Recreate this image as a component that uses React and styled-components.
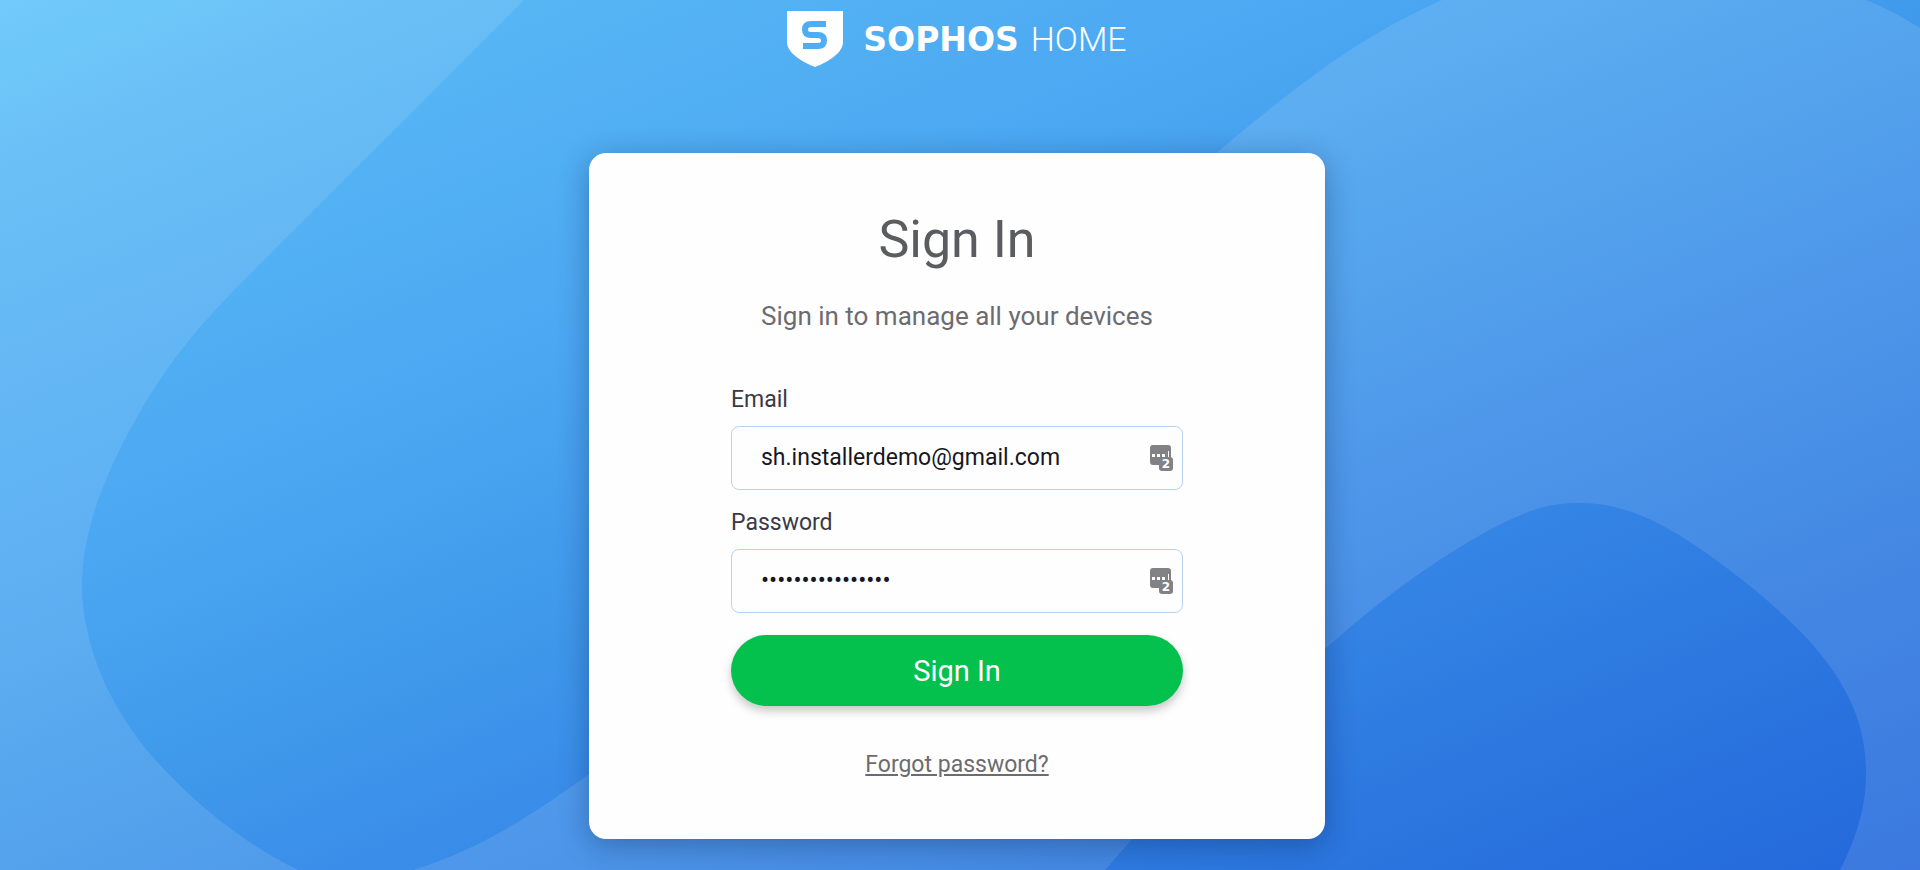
import React, { useState } from 'react';
import styled, { createGlobalStyle } from 'styled-components';

const GlobalStyle = createGlobalStyle`
  * {
    box-sizing: border-box;
  }

  body {
    margin: 0;
    font-family: Roboto, "Liberation Sans", sans-serif;
    font-size: 23px;
    line-height: 28px;
  }
`;

function Waves() {
  return (
    <Backdrop viewBox="0 0 1920 870" preserveAspectRatio="xMidYMid slice" aria-hidden="true">
      <path
        fill="#fff"
        fillOpacity="0.11"
        fillRule="evenodd"
        d="M0 0H524L300 224C262 262 230 293 200 327C176 355 155 385 137 417C105 473 82 532 82 585
          C82 624 95 665 111 696C124 721 142 746 161 766C182 789 207 811 230 828C251 844 272 857 298 870H413
          C443 861 470 849 497 834C530 816 560 795 589 774C800 610 1000 340 1220 150C1253 122 1289 93 1325 67
          C1362 41 1401 18 1442 0H1866C1886 8 1904 18 1920 28V870H1840C1854 843 1866 810 1866 774
          C1866 744 1860 720 1848 696C1836 672 1819 651 1801 632C1779 610 1754 588 1728 569
          C1703 550 1677 532 1649 519C1627 509 1604 503 1581 503C1565 503 1549 504 1534 510
          C1500 522 1467 542 1435 563C1397 588 1360 618 1325 649C1250 717 1173 790 1105 870H0Z"
      />
    </Backdrop>
  );
}

function Logo() {
  return (
    <Brand>
      <svg width="56" height="56" viewBox="0 0 56 56" aria-hidden="true">
        <path fill="#fff" d="M0 0H56V31C56 42 41 51 28 56C15 51 0 42 0 31Z" />
        <path
          fill="none"
          stroke="#4fadf3"
          strokeWidth="6"
          d="M39 13H24Q18 13 18 18.500Q18 24 24 24H31Q37 24 37 29.500Q37 35 31 35H16"
        />
      </svg>
      <BrandName>
        <strong>SOPHOS</strong>
        <span>HOME</span>
      </BrandName>
    </Brand>
  );
}

function ManagerIcon() {
  return (
    <FieldIcon width="24" height="28" viewBox="0 0 24 28" aria-hidden="true">
      <rect width="21" height="20" rx="3" fill="#828285" />
      <rect x="9" y="12" width="14" height="14" rx="3" fill="#828285" />
      <rect x="2" y="9" width="3" height="3" fill="#fff" />
      <rect x="7" y="9" width="3" height="3" fill="#fff" />
      <rect x="12" y="9" width="3" height="3" fill="#fff" />
      <rect x="18" y="6" width="1" height="6" fill="#fff" />
      <text x="16" y="23" textAnchor="middle" fontSize="12" fontWeight="700" fontFamily="DejaVu Sans, sans-serif" fill="#fff">2</text>
    </FieldIcon>
  );
}

function Field({ id, label, ...rest }) {
  return (
    <FieldGroup>
      <label htmlFor={id}>{label}</label>
      <FieldBox>
        <input id={id} name={id} {...rest} />
        <ManagerIcon />
      </FieldBox>
    </FieldGroup>
  );
}

function App() {
  const [email, setEmail] = useState('sh.installerdemo@gmail.com');
  const [password, setPassword] = useState('installerdemo123');

  const handleSubmit = (e) => {
    e.preventDefault();
  };

  return (
    <>
      <GlobalStyle />
      <Page>
        <Waves />
        <Logo />
        <Card>
          <Title>Sign In</Title>
          <Subtitle>Sign in to manage all your devices</Subtitle>
          <Form onSubmit={handleSubmit}>
            <Field id="email" label="Email" type="email" value={email} onChange={(e) => setEmail(e.target.value)} />
            <Field id="password" label="Password" type="password" value={password} onChange={(e) => setPassword(e.target.value)} />
            <Button type="submit">Sign In</Button>
          </Form>
          <ForgotLink href="#forgot">Forgot password?</ForgotLink>
        </Card>
      </Page>
    </>
  );
}

export default App;

const Page = styled.div`
  position: relative;
  min-height: 100vh;
  display: flex;
  flex-direction: column;
  align-items: center;
  padding: 11px 6px 31px 0;
  background: linear-gradient(157deg, #60c4fb 0%, #56b6f4 13%, #4ba7f2 35%, #3f98ea 51%, #3a8de9 61%, #2d7ae0 80%, #2468dc 100%);
  isolation: isolate;
`;

const Backdrop = styled.svg`
  position: absolute;
  inset: 0;
  width: 100%;
  height: 100%;
  z-index: -1;
`;

const Brand = styled.header`
  display: flex;
  align-items: center;
  gap: 20px;
  color: #fff;
`;

const BrandName = styled.div`
  display: flex;
  align-items: baseline;
  gap: 12px;
  font-size: 34px;
  line-height: 40px;

  strong {
    font-family: "DejaVu Sans", sans-serif;
    font-size: 33px;
    font-weight: 700;
  }

  span {
    font-weight: 300;
  }
`;

const Card = styled.main`
  width: 100%;
  max-width: 736px;
  margin-top: 86px;
  padding: 57px 24px 60px;
  display: flex;
  flex-direction: column;
  align-items: center;
  background: #fefefe;
  border-radius: 17px;
  box-shadow: 0 6px 30px rgba(0, 20, 60, 0.32);
`;

const Title = styled.h1`
  margin: 0;
  font-size: 52px;
  line-height: 60px;
  font-weight: 400;
  color: #5b5c60;
`;

const Subtitle = styled.p`
  margin: 30px 0 54px;
  font-size: 26px;
  line-height: 32px;
  color: #6c6c70;
`;

const Form = styled.form`
  width: 100%;
  max-width: 452px;
  display: flex;
  flex-direction: column;
  gap: 19px;
`;

const FieldGroup = styled.div`
  display: flex;
  flex-direction: column;
  gap: 12px;
  color: #3a3a46;
`;

const FieldBox = styled.div`
  position: relative;
  display: flex;

  input {
    width: 100%;
    height: 64px;
    padding: 0 48px 2px 29px;
    font: inherit;
    color: #17171f;
    background: #fefefe;
    border: 1px solid #b5d3ee;
    border-radius: 8px;
    outline: none;
  }

  input[type="password"] {
    font-size: 24px;
  }

  input:focus {
    border-color: #4ba7f2;
  }
`;

const FieldIcon = styled.svg`
  position: absolute;
  top: 19px;
  right: 9px;
`;

const Button = styled.button`
  height: 71px;
  margin-top: 3px;
  font-family: inherit;
  font-size: 29px;
  color: #fff;
  background: #04c04d;
  border: none;
  border-radius: 36px;
  box-shadow: 0 5px 10px rgba(0, 0, 0, 0.22);
  cursor: pointer;

  &:hover {
    background: #03ad45;
  }
`;

const ForgotLink = styled.a`
  margin-top: 45px;
  color: #6c6c70;
  text-decoration: underline;
`;
